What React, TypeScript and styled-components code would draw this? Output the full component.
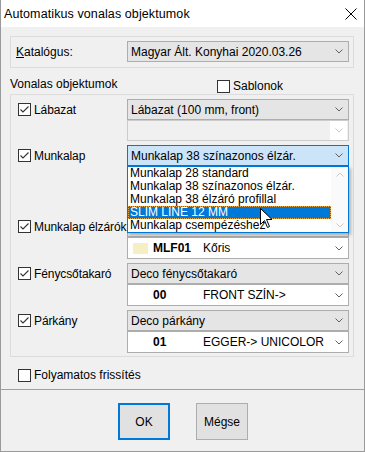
import React from 'react';
import styled, { createGlobalStyle } from 'styled-components';

const GlobalStyle = createGlobalStyle`
  body {
    margin: 0;
    background: #ffffff;
  }
`;

const Window = styled.div`
  width: 365px;
  height: 452px;
  box-sizing: border-box;
  border: 1px solid #9a9a9a;
  border-top: none;
  background: #f0f0f0;
  display: flex;
  flex-direction: column;
  font-family: 'Liberation Sans', Arial, sans-serif;
  font-size: 12px;
  color: #000;
  overflow: hidden;
`;

const TitleBar = styled.div`
  height: 27px;
  flex: none;
  background: #ffffff;
  display: flex;
  align-items: center;
  justify-content: space-between;
  padding: 0 7px 0 3px;
`;

const TitleText = styled.span`
  font-size: 12.5px;
  letter-spacing: 0.1px;
`;

const Content = styled.div`
  flex: 1;
  padding: 9px 10px 0 9px;
  display: flex;
  flex-direction: column;
`;

const CatalogFrame = styled.div`
  height: 32px;
  box-sizing: border-box;
  border: 1px solid #dcdcdc;
  display: flex;
  align-items: center;
  padding: 0 4px 1px 0;
`;

const CatalogLabel = styled.span`
  width: 116px;
  padding-left: 5px;
  box-sizing: border-box;
`;

const AccessKey = styled.span`
  text-decoration: underline;
`;

const HeaderRow = styled.div`
  height: 26px;
  display: flex;
  align-items: flex-end;
  padding-bottom: 1px;
  box-sizing: border-box;
`;

const HeaderTitle = styled.span`
  width: 207px;
  line-height: 15px;
  padding-bottom: 1px;
`;

const GroupFrame = styled.div`
  border: 1px solid #dcdcdc;
  padding: 4px 4px 3px 7px;
  display: flex;
  flex-direction: column;
  gap: 4px;
`;

const Row = styled.div<{ $minHeight?: number }>`
  display: grid;
  grid-template-columns: 109px 222px;
  min-height: ${(p) => (p.$minHeight ? `${p.$minHeight}px` : 'auto')};
`;

const RowLabel = styled.div`
  height: 21px;
  display: flex;
  align-items: center;
  letter-spacing: -0.1px;
`;

const ComboStack = styled.div`
  display: flex;
  flex-direction: column;
  position: relative;
`;

const comboColors = {
  gray: { bg: '#e5e5e5', border: '#adadad', height: 21 },
  disabled: { bg: '#f0f0f0', border: '#cccccc', height: 21 },
  white: { bg: '#ffffff', border: '#adadad', height: 22 },
  open: { bg: '#cce4f7', border: '#0078d7', height: 21 },
};

type ComboVariant = keyof typeof comboColors;

const ComboBox = styled.div<{ $variant: ComboVariant; $inset?: number }>`
  width: 222px;
  height: ${(p) => comboColors[p.$variant].height}px;
  box-sizing: border-box;
  background: ${(p) => comboColors[p.$variant].bg};
  border: 1px solid ${(p) => comboColors[p.$variant].border};
  display: flex;
  align-items: center;
  padding-left: ${(p) => p.$inset ?? 3}px;
  flex: none;
`;

const ComboText = styled.span`
  flex: 1;
  white-space: nowrap;
  overflow: hidden;
`;

const ArrowArea = styled.div<{ $light?: boolean }>`
  width: 17px;
  align-self: stretch;
  display: flex;
  align-items: center;
  justify-content: center;
  background: ${(p) => (p.$light ? '#ffffff' : 'transparent')};
  margin-right: 1px;
`;

const Swatch = styled.span<{ $color?: string }>`
  width: 15px;
  height: 11px;
  margin: 0 5px 0 1px;
  background: ${(p) => p.$color ?? 'transparent'};
  flex: none;
`;

const Code = styled.span`
  width: 50px;
  font-weight: bold;
  flex: none;
`;

const CheckRow = styled.label`
  display: flex;
  align-items: center;
  gap: 3px;
  white-space: nowrap;
`;

const Box = styled.span`
  width: 13px;
  height: 13px;
  box-sizing: border-box;
  border: 1px solid #333333;
  background: #ffffff;
  display: flex;
  align-items: center;
  justify-content: center;
  flex: none;
`;

const DropList = styled.div`
  position: absolute;
  top: 21px;
  left: 0;
  width: 222px;
  height: 67px;
  box-sizing: border-box;
  border: 1px solid #0078d7;
  background: #ffffff;
  display: flex;
  box-shadow: 2px 2px 3px rgba(0, 0, 0, 0.25);
  z-index: 2;
`;

const ListItems = styled.div`
  flex: 1;
  display: flex;
  flex-direction: column;
`;

const ListItem = styled.div<{ $selected?: boolean }>`
  height: 13px;
  line-height: 13px;
  padding-left: 2px;
  box-sizing: border-box;
  white-space: nowrap;
  background: ${(p) => (p.$selected ? '#0078d7' : 'transparent')};
  color: ${(p) => (p.$selected ? '#ffffff' : '#000000')};
  outline: ${(p) => (p.$selected ? '1px dotted #e8a848' : 'none')};
  outline-offset: -1px;
`;

const ScrollBar = styled.div`
  width: 17px;
  background: #fafafa;
  display: flex;
  flex-direction: column;
  justify-content: space-between;
  align-items: center;
  padding: 5px 0 4px;
  box-sizing: border-box;
`;

const Cursor = styled.svg`
  position: absolute;
  left: 132px;
  top: 41px;
  z-index: 3;
`;

const FooterOption = styled.div`
  margin-top: 11px;
  padding-left: 8px;
`;

const Footer = styled.div`
  height: 62px;
  flex: none;
  box-sizing: border-box;
  border-top: 1px solid #a0a0a0;
  display: flex;
  justify-content: center;
  align-items: flex-start;
  gap: 26px;
  padding: 13px 0 0 1px;
`;

const Button = styled.button<{ $default?: boolean }>`
  width: 52px;
  height: 37px;
  box-sizing: border-box;
  background: #e1e1e1;
  border: ${(p) => (p.$default ? '2px solid #0078d7' : '1px solid #adadad')};
  font-family: 'Liberation Sans', Arial, sans-serif;
  font-size: 12px;
  color: #000;
  padding: 0;
`;

const Chevron = ({ color = '#606060' }: { color?: string }) => (
  <svg width="8" height="5" viewBox="0 0 8 5">
    <polyline points="0.5,0.5 4,4 7.5,0.5" fill="none" stroke={color} strokeWidth="1" />
  </svg>
);

const ChevronUp = ({ color = '#c8c8c8' }: { color?: string }) => (
  <svg width="8" height="5" viewBox="0 0 8 5">
    <polyline points="0.5,4.5 4,1 7.5,4.5" fill="none" stroke={color} strokeWidth="1" />
  </svg>
);

const CheckBox = ({ checked, label }: { checked?: boolean; label: string }) => (
  <CheckRow>
    <Box>
      {checked && (
        <svg width="11" height="11" viewBox="0 0 11 11">
          <polyline points="1.5,5.5 4,8 9.5,2.5" fill="none" stroke="#333333" strokeWidth="1.1" />
        </svg>
      )}
    </Box>
    {label}
  </CheckRow>
);

const Combo = ({ variant = 'gray', text }: { variant?: ComboVariant; text?: string }) => (
  <ComboBox $variant={variant}>
    <ComboText>{text}</ComboText>
    <ArrowArea $light={variant === 'disabled'}>
      <Chevron color={variant === 'disabled' ? '#c8c8c8' : '#606060'} />
    </ArrowArea>
  </ComboBox>
);

const ColorCombo = ({ code, name, color }: { code?: string; name?: string; color?: string }) => (
  <ComboBox $variant="white" $inset={4}>
    <Swatch $color={color} />
    <Code>{code}</Code>
    <ComboText>{name}</ComboText>
    <ArrowArea>
      <Chevron />
    </ArrowArea>
  </ComboBox>
);

const listItems = [
  'Munkalap 28 standard',
  'Munkalap 38 színazonos élzár.',
  'Munkalap 38 élzáró profillal',
  'SLIM LINE 12 MM',
  'Munkalap csempézéshez',
];

const App = () => {
  return (
    <>
      <GlobalStyle />
      <Window>
        <TitleBar>
          <TitleText>Automatikus vonalas objektumok</TitleText>
          <svg width="12" height="12" viewBox="0 0 12 12">
            <path d="M0.5 0.5 L11.5 11.5 M11.5 0.5 L0.5 11.5" stroke="#000" strokeWidth="1" />
          </svg>
        </TitleBar>
        <Content>
          <CatalogFrame>
            <CatalogLabel>
              <AccessKey>K</AccessKey>atalógus:
            </CatalogLabel>
            <Combo text="Magyar Ált. Konyhai 2020.03.26" />
          </CatalogFrame>

          <HeaderRow>
            <HeaderTitle>Vonalas objektumok</HeaderTitle>
            <CheckBox label="Sablonok" />
          </HeaderRow>

          <GroupFrame>
            <Row>
              <RowLabel>
                <CheckBox checked label="Lábazat" />
              </RowLabel>
              <ComboStack>
                <Combo text="Lábazat (100 mm, front)" />
                <Combo variant="disabled" />
              </ComboStack>
            </Row>

            <Row $minHeight={67}>
              <RowLabel>
                <CheckBox checked label="Munkalap" />
              </RowLabel>
              <ComboStack>
                <Combo variant="open" text="Munkalap 38 színazonos élzár." />
                <ColorCombo />
                <DropList>
                  <ListItems>
                    {listItems.map((item, i) => (
                      <ListItem key={item} $selected={i === 3}>
                        {item}
                      </ListItem>
                    ))}
                  </ListItems>
                  <ScrollBar>
                    <ChevronUp />
                    <Chevron color="#c8c8c8" />
                  </ScrollBar>
                  <Cursor width="13" height="21" viewBox="0 0 13 21">
                    <path
                      d="M0.5 0.5 L0.5 16.5 L4.5 12.5 L7.5 19.5 L9.5 18.5 L6.5 11.5 L12 11.5 Z"
                      fill="#ffffff"
                      stroke="#000000"
                      strokeWidth="1"
                    />
                  </Cursor>
                </DropList>
              </ComboStack>
            </Row>

            <Row>
              <RowLabel>
                <CheckBox checked label="Munkalap élzárók" />
              </RowLabel>
              <ComboStack>
                <Combo />
                <ColorCombo code="MLF01" name="Kőris" color="#f7efc4" />
              </ComboStack>
            </Row>

            <Row>
              <RowLabel>
                <CheckBox checked label="Fénycsőtakaró" />
              </RowLabel>
              <ComboStack>
                <Combo text="Deco fénycsőtakaró" />
                <ColorCombo code="00" name="FRONT SZÍN->" />
              </ComboStack>
            </Row>

            <Row>
              <RowLabel>
                <CheckBox checked label="Párkány" />
              </RowLabel>
              <ComboStack>
                <Combo text="Deco párkány" />
                <ColorCombo code="01" name="EGGER-> UNICOLOR" />
              </ComboStack>
            </Row>
          </GroupFrame>

          <FooterOption>
            <CheckBox label="Folyamatos frissítés" />
          </FooterOption>
        </Content>
        <Footer>
          <Button $default>OK</Button>
          <Button>Mégse</Button>
        </Footer>
      </Window>
    </>
  );
};

export default App;
